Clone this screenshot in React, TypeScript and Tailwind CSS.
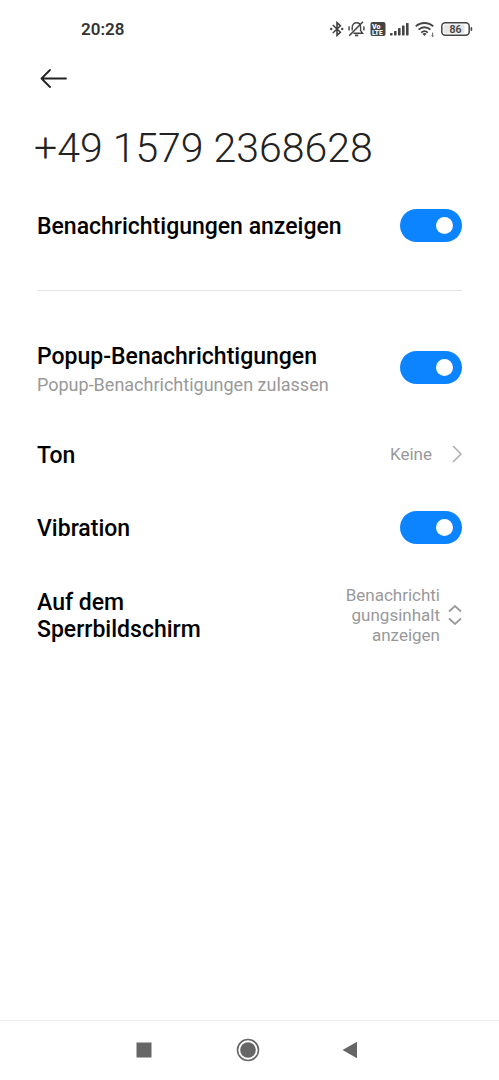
import { useState } from "react";

function StatusIcons() {
  return (
    <div className="flex items-center gap-1 text-[#444]">
      {/* Bluetooth */}
      <svg width="14" height="16" viewBox="0 0 14 16" fill="none" stroke="currentColor" strokeWidth="1.6">
        <path d="M2.8 4 10.4 11.200 7 14.400V1.600L10.400 4.800 2.800 12" />
        <circle cx="1.2" cy="8" r="1.2" fill="currentColor" stroke="none" />
        <circle cx="12.2" cy="8" r="1.2" fill="currentColor" stroke="none" />
      </svg>
      {/* Muted bell */}
      <svg width="18" height="16" viewBox="0 0 18 16" fill="none" stroke="currentColor" strokeWidth="1.4">
        <path d="M4.200 9.400V6.400C4.200 3.400 6.200 1.800 8.400 1.800s4.200 1.600 4.200 4.600v3.200l2 2.600H5.400" />
        <path d="M7 14.400h3.200" strokeWidth="1.8" />
        <path d="M15 .8 1.200 14.800" strokeWidth="1.600" />
        <path d="M1.400 5.400c-.6 1.400-.6 2.600 0 4M15.600 5.400c.6 1.400.6 2.600 0 4" />
      </svg>
      {/* VoLTE */}
      <svg width="16" height="16" viewBox="0 0 16 16">
        <rect x="0.5" y="1" width="15" height="14" rx="2" fill="currentColor" />
        <g fill="#fff" fontFamily="Roboto, sans-serif" fontWeight="900">
          <text x="2" y="7.5" fontSize="7">Vo</text>
          <text x="2" y="13.6" fontSize="6.5">LTE</text>
        </g>
      </svg>
      {/* Signal */}
      <svg width="19" height="16" viewBox="0 0 19 16" fill="currentColor">
        <rect x="0" y="12" width="2.6" height="2.4" rx="0.6" />
        <rect x="4" y="10" width="2.6" height="4.4" rx="0.6" />
        <rect x="8" y="7" width="2.6" height="7.4" rx="0.6" />
        <rect x="12" y="4.5" width="2.6" height="9.9" rx="0.6" />
        <rect x="16" y="2" width="2.6" height="12.4" rx="0.6" />
      </svg>
      {/* Wifi */}
      <svg width="20" height="16" viewBox="0 0 20 16" fill="none" stroke="currentColor" strokeWidth="1.9" className="ml-0.5">
        <path d="M.8 5.4c4.8-4.6 12.6-4.6 17.4 0" />
        <path d="M3.6 8.6c3.4-3.2 8.4-3.2 11.8 0" />
        <path d="M6.2 11.6c1.9-1.7 4.7-1.7 6.6 0" />
        <path d="m7.4 12.8 2.1 2.2 2.1-2.2c-1.2-1-3-1-4.2 0Z" fill="currentColor" stroke="none" />
        <path d="M17.6 11.5v4m-1-1 1 1 1-1" strokeWidth="0.8" />
      </svg>
      {/* Battery */}
      <svg width="32" height="16" viewBox="0 0 32 16" className="ml-0.5">
        <rect x="0.8" y="1.8" width="27.4" height="12.4" rx="3.5" fill="#fff" stroke="currentColor" strokeWidth="1.5" />
        <rect x="2.5" y="3.5" width="21" height="9" rx="1.5" fill="#e6e6e6" />
        <rect x="29.6" y="6" width="1.6" height="4" rx="0.8" fill="currentColor" />
        <text x="14.5" y="11.8" fontSize="10.5" fontWeight="600" fontFamily="Roboto, sans-serif" textAnchor="middle" fill="currentColor">
          86
        </text>
      </svg>
    </div>
  );
}

function StatusBar() {
  return (
    <div className="flex h-[58px] items-center justify-between pl-[81px] pr-[26px]">
      <span className="text-[17px] leading-5 font-semibold text-[#333]">20:28</span>
      <StatusIcons />
    </div>
  );
}

type ToggleRowProps = {
  id: string;
  label: string;
  hint?: string;
  checked: boolean;
  onChange: (checked: boolean) => void;
};

function ToggleRow({ id, label, hint, checked, onChange }: ToggleRowProps) {
  return (
    <div className={`flex items-center justify-between gap-4 ${hint ? "h-[101px]" : "h-[73px]"}`}>
      <label htmlFor={id} className={hint ? "pt-1.5" : "pt-0.5"}>
        <span className="block text-[23px] leading-7 font-medium text-black">{label}</span>
        {hint && <span className="block text-lg leading-[27px] text-[#999]">{hint}</span>}
      </label>
      <input
        id={id}
        type="checkbox"
        role="switch"
        checked={checked}
        onChange={(e) => onChange(e.target.checked)}
        className="flex h-[33px] w-[62px] shrink-0 appearance-none items-center rounded-full bg-[#dcdcdc] px-[9px] before:size-[17px] before:rounded-full before:bg-white checked:justify-end checked:bg-[#0d84ff]"
      />
    </div>
  );
}

export default function App() {
  const [show, setShow] = useState(true);
  const [popup, setPopup] = useState(true);
  const [vibration, setVibration] = useState(true);
  const [lockScreen, setLockScreen] = useState("content");

  return (
    <div className="flex min-h-screen flex-col bg-white font-[Roboto,sans-serif]">
      <StatusBar />

      <header>
        <div className="flex h-10 items-center px-10">
          <button type="button" aria-label="Zurück">
            <svg width="27" height="20" viewBox="0 0 27 20" fill="none" stroke="#222" strokeWidth="1.8" strokeLinecap="round" strokeLinejoin="round">
              <path d="M26 10.5H1.5M10 2 1.5 10.5 10 19" />
            </svg>
          </button>
        </div>
        <h1 className="mt-5 px-[34px] text-[41px] leading-[60px] font-light text-[#222]">
          +49 1579 2368628
        </h1>
      </header>

      <main className="flex-1 px-[37px] pt-[11px]">
        <ToggleRow id="show" label="Benachrichtigungen anzeigen" checked={show} onChange={setShow} />
        <hr className="mt-7 mb-[26px] border-[#e2e2e2]" />
        <ToggleRow
          id="popup"
          label="Popup-Benachrichtigungen"
          hint="Popup-Benachrichtigungen zulassen"
          checked={popup}
          onChange={setPopup}
        />

        <button type="button" className="flex h-[73px] w-full items-center justify-between text-left">
          <span className="pt-0.5 text-[23px] leading-7 font-medium text-black">Ton</span>
          <span className="flex items-center gap-5 pb-0.5 text-[17px] leading-5 text-[#999]">
            Keine
            <svg width="10" height="18" viewBox="0 0 10 18" fill="none" stroke="#aaa" strokeWidth="1.5">
              <path d="m1 1 8 8-8 8" />
            </svg>
          </span>
        </button>

        <ToggleRow id="vibration" label="Vibration" checked={vibration} onChange={setVibration} />

        <div className="flex items-center justify-between gap-4 py-[21px]">
          <label htmlFor="lock-screen" className="w-[180px] pt-0.5 text-[23px] leading-[27px] font-medium text-black">
            Auf dem Sperrbildschirm
          </label>
          <div className="flex items-center gap-2">
            <select
              id="lock-screen"
              value={lockScreen}
              onChange={(e) => setLockScreen(e.target.value)}
              className="w-[98px] appearance-none text-right text-[17px] leading-5 break-words whitespace-normal text-[#999]"
            >
              <option value="content">Benachrichtigungsinhalt anzeigen</option>
              <option value="hide">Inhalt ausblenden</option>
              <option value="none">Nicht anzeigen</option>
            </select>
            <svg width="14" height="20" viewBox="0 0 14 20" fill="none" stroke="#999" strokeWidth="1.7">
              <path d="M1 6.5 7 1l6 5.5M1 13.5 7 19l6-5.5" />
            </svg>
          </div>
        </div>
      </main>

      <nav className="flex h-[60px] items-center justify-center gap-20 border-t border-[#eee] pr-[3px] pb-0.5 text-[#666]">
        <button type="button" aria-label="Letzte Apps">
          <svg width="24" height="24" viewBox="0 0 24 24" fill="currentColor">
            <rect x="4.5" y="4.5" width="15" height="15" />
          </svg>
        </button>
        <button type="button" aria-label="Startbildschirm">
          <svg width="24" height="24" viewBox="0 0 24 24" fill="currentColor">
            <circle cx="12" cy="12" r="10.5" fill="none" stroke="currentColor" strokeWidth="1.6" />
            <circle cx="12" cy="12" r="7.8" />
          </svg>
        </button>
        <button type="button" aria-label="Zurück">
          <svg width="24" height="24" viewBox="0 0 24 24" fill="currentColor">
            <path d="M2.5 12 17 3.8v16.4Z" />
          </svg>
        </button>
      </nav>
    </div>
  );
}
